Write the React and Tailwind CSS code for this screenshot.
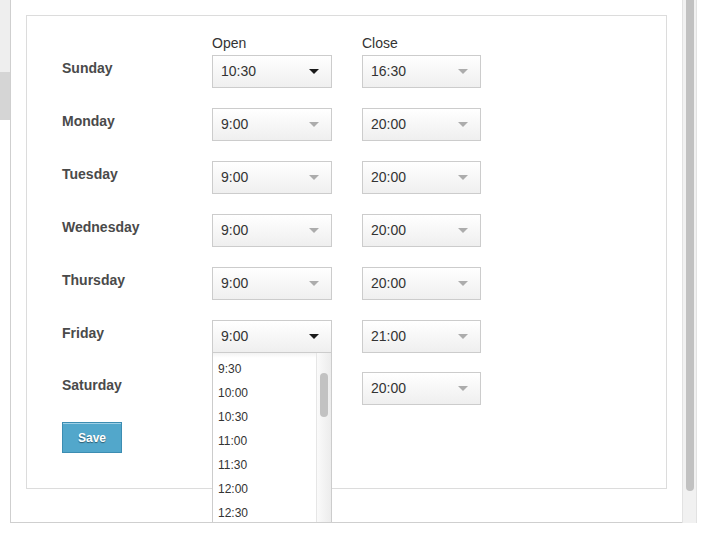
import React from "react";

const DAYS = [
  { day: "Sunday", open: "10:30", close: "16:30", activeOpen: true },
  { day: "Monday", open: "9:00", close: "20:00" },
  { day: "Tuesday", open: "9:00", close: "20:00" },
  { day: "Wednesday", open: "9:00", close: "20:00" },
  { day: "Thursday", open: "9:00", close: "20:00" },
  { day: "Friday", open: "9:00", close: "21:00", activeOpen: true, dropdown: true },
  { day: "Saturday", open: "9:00", close: "20:00" },
];

const OPTIONS = ["9:30", "10:00", "10:30", "11:00", "11:30", "12:00", "12:30"];

function Select({ value, active, width = "w-[120px]", children }) {
  return (
    <div className={`relative ${width} h-[33px]`}>
      <div className="h-full border border-[#cccccc] bg-linear-to-b from-white to-[#efefef] flex items-center pl-[8px] text-[14px] text-[#333333]">
        {value}
        <span
          className={`absolute right-[13px] top-[14px] w-0 h-0 border-l-[5px] border-r-[5px] border-t-[5px] border-l-transparent border-r-transparent ${
            active ? "border-t-[#1a1a1a]" : "border-t-[#acacac]"
          }`}
        />
      </div>
      {children}
    </div>
  );
}

function Dropdown() {
  return (
    <div className="absolute left-0 top-full w-[120px] h-[200px] z-10 bg-white border-l border-r border-[#cccccc] flex">
      <div className="flex-1 pt-[4px] bg-linear-to-b from-[#f3f3f3] to-white bg-no-repeat bg-[length:100%_5px]">
        {OPTIONS.map((o) => (
          <div key={o} className="h-[24px] leading-[24px] pl-[5px] text-[12px] text-[#333333]">
            {o}
          </div>
        ))}
      </div>
      <div className="w-[15px] border-l border-[#e6e6e6] bg-linear-to-r from-[#fafafa] to-[#ececec] pt-[20px] pl-[3px]">
        <div className="w-[8px] h-[44px] rounded-full bg-[#c2c2c2]" />
      </div>
    </div>
  );
}

export default function App() {
  return (
    <div
      className="w-[715px] h-[545px] bg-white flex overflow-hidden"
      style={{ fontFamily: '"Liberation Sans", Arial, sans-serif' }}
    >
      <div className="w-[10px] flex flex-col">
        <div className="h-[72px] bg-[#eeeeee]" />
        <div className="h-[48px] bg-[#d5d5d5]" />
      </div>

      <div className="w-[672px] h-[523px] border-l border-b border-[#cfcfcf] pl-[15px] pt-[15px] overflow-hidden">
        <div className="w-[641px] h-[474px] border border-[#dcdcdc] pl-[35px] pt-[18px]">
          <div className="grid grid-cols-[150px_150px_120px] h-[21px] text-[14px] leading-[18px] text-[#333333]">
            <div />
            <div>Open</div>
            <div>Close</div>
          </div>

          {DAYS.map((d, i) => (
            <div
              key={d.day}
              className={`grid grid-cols-[150px_150px_120px] h-[33px] ${
                i === 6 ? "mb-[17px]" : i === 5 ? "mb-[19px]" : "mb-[20px]"
              }`}
            >
              <div className="pt-[3px] text-[14px] leading-[20px] font-bold text-[#4a4a4a]">{d.day}</div>
              <div className={d.dropdown ? "relative z-10" : ""}>
                <Select value={d.open} active={d.activeOpen}>
                  {d.dropdown && <Dropdown />}
                </Select>
              </div>
              <div>
                <Select value={d.close} width="w-[119px]" />
              </div>
            </div>
          ))}

          <button className="block w-[60px] h-[31px] border border-[#3c8db2] bg-[#52a7cb] shadow-[inset_0_1px_0_#9fd0e6] text-white text-[12px] font-bold [text-shadow:0_1px_1px_rgba(0,0,0,0.45)]">
            Save
          </button>
        </div>
      </div>

      <div className="w-[15px] h-[523px] bg-[#f1f1f1] border-l border-r border-[#e2e2e2] pl-[3px]">
        <div className="w-[8px] h-[491px] rounded-b-full bg-[#c1c1c1]" />
      </div>
    </div>
  );
}
